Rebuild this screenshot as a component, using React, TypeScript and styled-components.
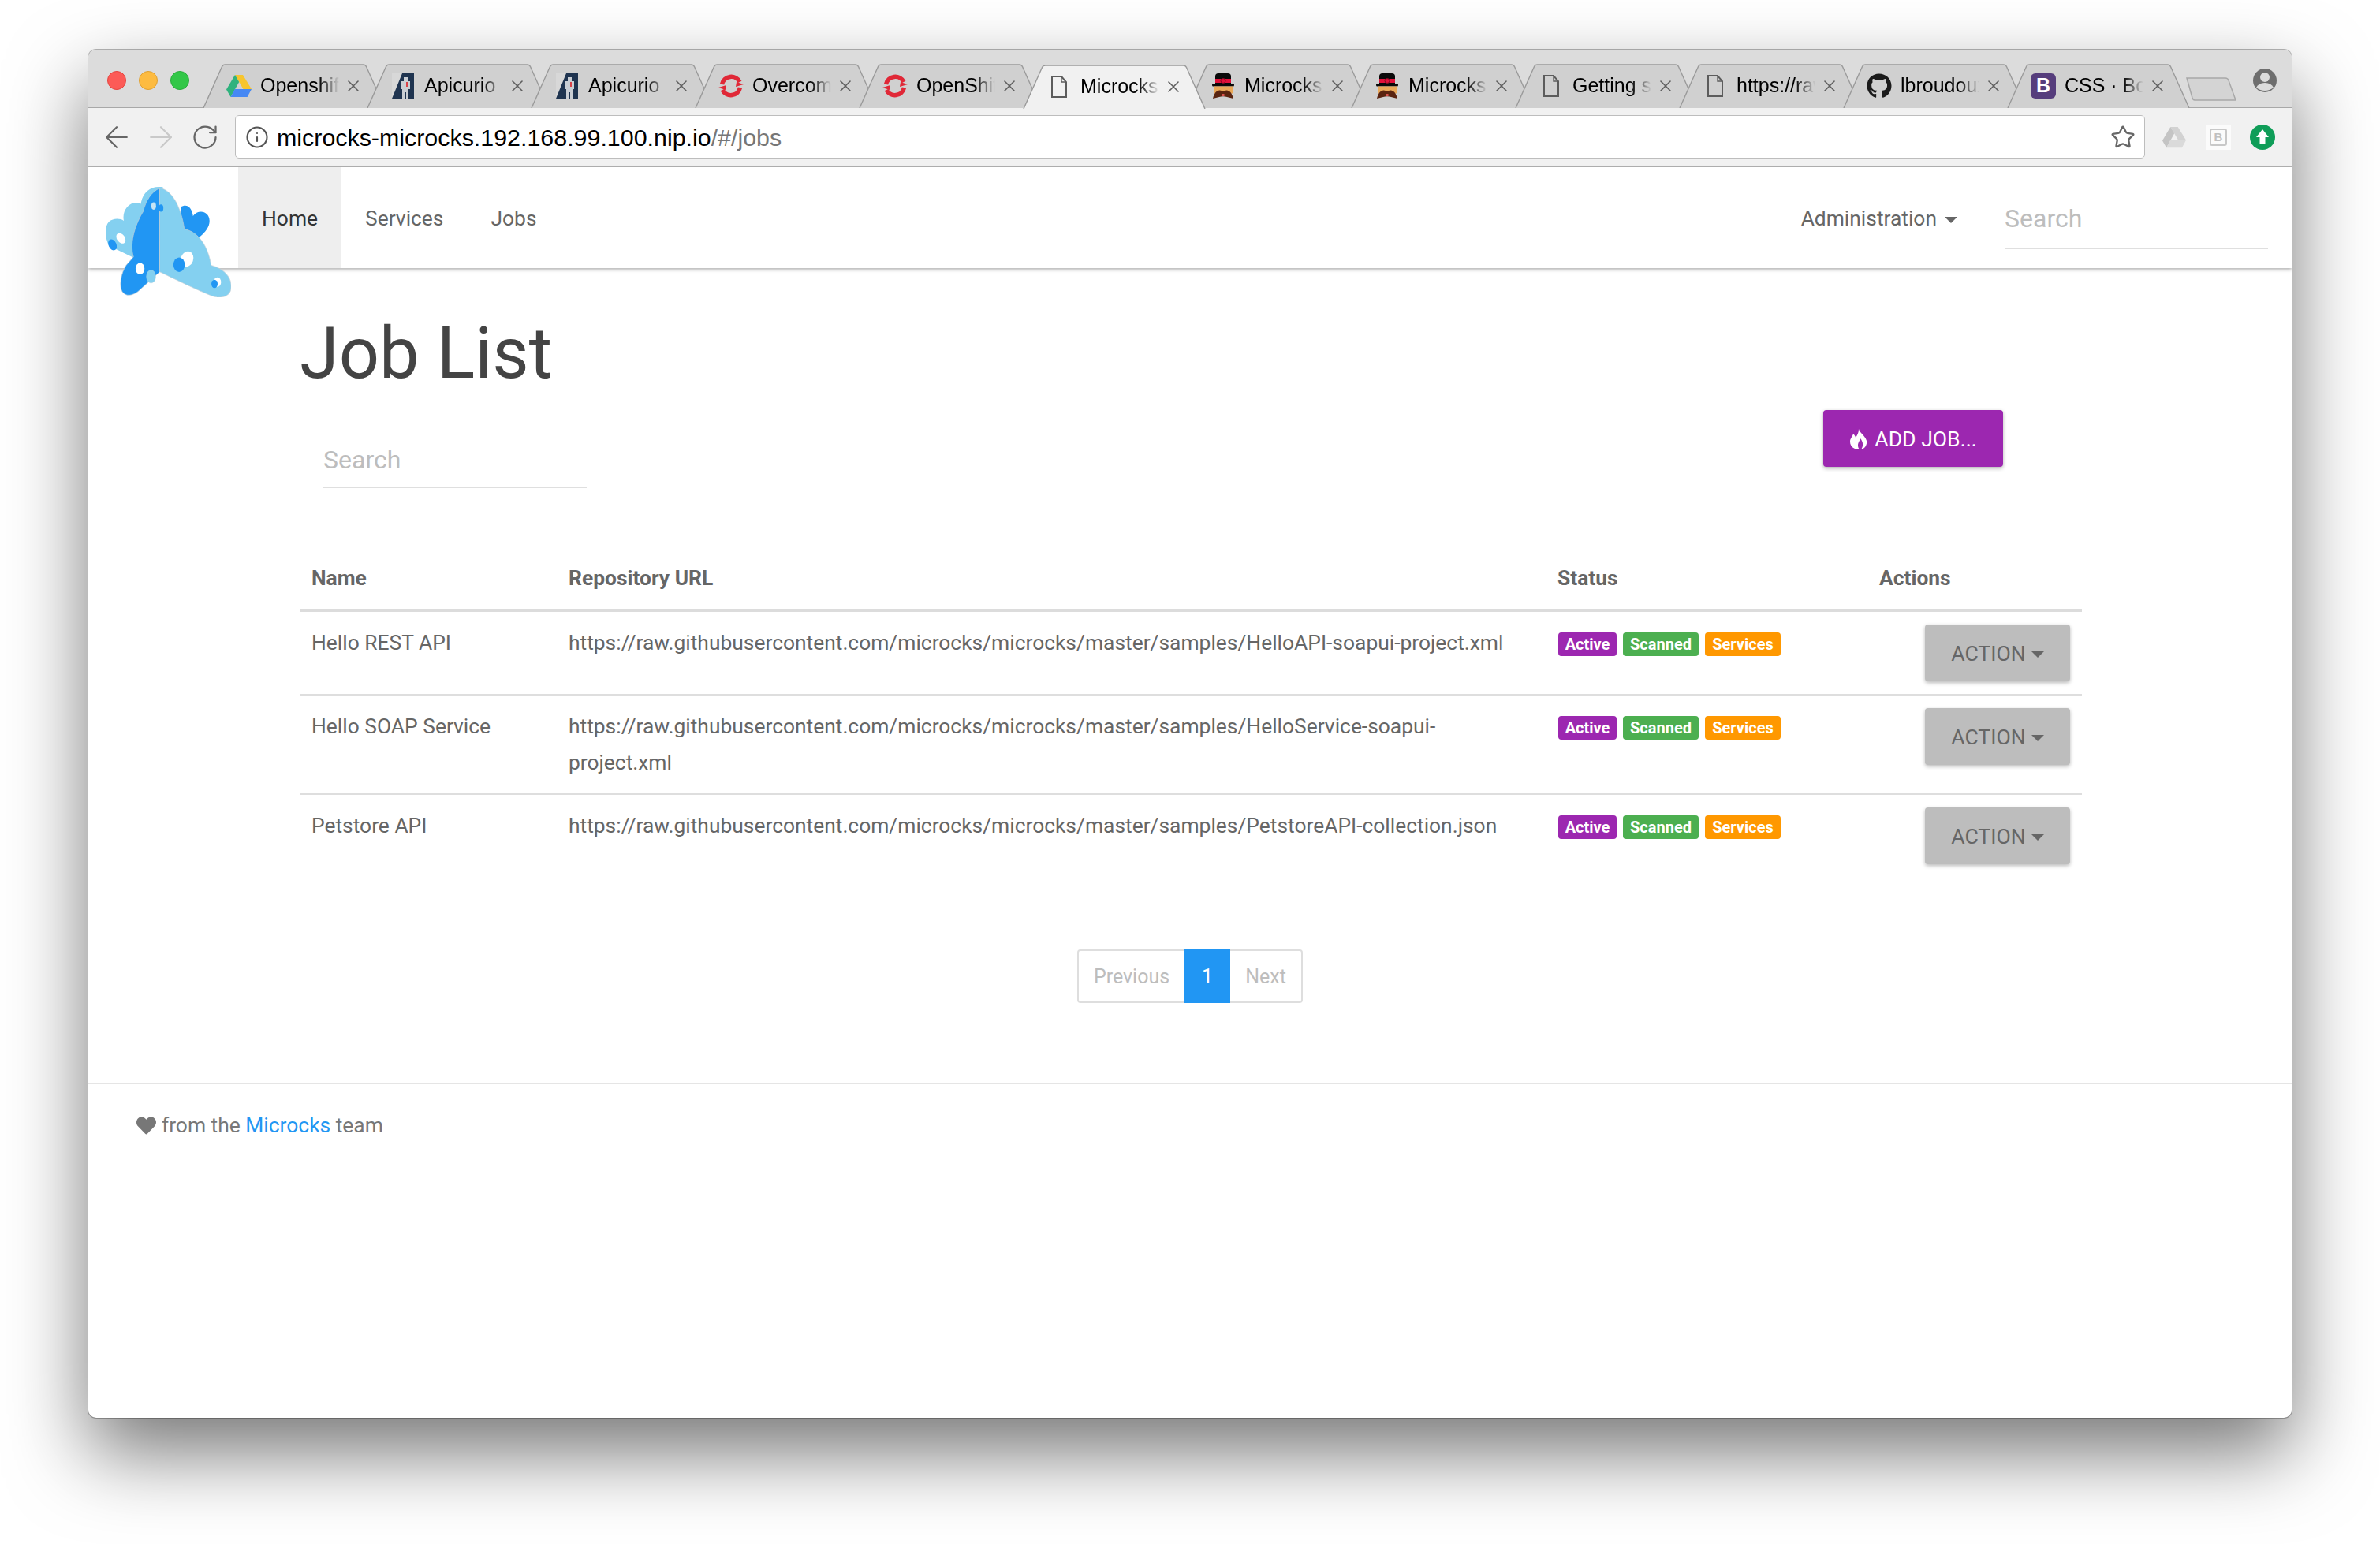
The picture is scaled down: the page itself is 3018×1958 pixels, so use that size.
import React from "react";
import styled, { createGlobalStyle } from "styled-components";
import { ArrowLeft, ArrowRight, RotateCw, Info, Star, X } from "lucide-react";
import { FaGithub, FaHeart } from "react-icons/fa";

const Global = createGlobalStyle`
  html, body { margin: 0; padding: 0; background: #fff; }
  body { font-family: Roboto, "Liberation Sans", sans-serif; }
  #root { width: 3018px; height: 1958px; overflow: hidden; }
  * { box-sizing: border-box; }
  input::placeholder { color: #bdbdbd; opacity: 1; }
`;

const Stage = styled.div`
  width: 3018px;
  height: 1958px;
  padding: 63px 112px 0;
`;
const BrowserWindow = styled.div`
  width: 2794px;
  height: 1735px;
  background: #fff;
  border-radius: 10px;
  box-shadow: 0 0 0 1px rgba(0, 0, 0, 0.28), 0 44px 100px rgba(0, 0, 0, 0.54);
  overflow: hidden;
  display: flex;
  flex-direction: column;
`;
const TabStrip = styled.div`
  height: 74px;
  flex: none;
  background: #dcdcdc;
  border-bottom: 1px solid #a8a8a8;
  display: flex;
`;
const Lights = styled.div`
  display: flex;
  gap: 16px;
  margin: 27px 17px 0 24px;
  align-self: flex-start;
`;
const Light = styled.span<{ $c: string; $b: string }>`
  width: 24px;
  height: 24px;
  border-radius: 50%;
  background: ${(p) => p.$c};
  border: 1px solid ${(p) => p.$b};
`;
const Tabs = styled.div`
  display: flex;
  align-items: flex-end;
  align-self: flex-end;
`;
const TabItem = styled.div<{ $active?: boolean }>`
  position: relative;
  width: 232px;
  height: 55px;
  margin-right: -24px;
  margin-bottom: ${(p) => (p.$active ? "-1px" : "0")};
  z-index: ${(p) => (p.$active ? 2 : 1)};
  display: flex;
  align-items: center;
  font-family: "Liberation Sans", Arial, sans-serif;
  font-size: 25px;
  color: #000;
`;
const TabShape = styled.svg`
  position: absolute;
  left: 0;
  top: 0;
  width: 232px;
  height: 56px;
`;
const Favicon = styled.span`
  position: relative;
  width: 32px;
  height: 34px;
  margin-left: 30px;
  display: flex;
  align-items: center;
  justify-content: center;
  flex: none;
`;
const TabTitle = styled.span`
  position: relative;
  width: 100px;
  margin-left: 11px;
  overflow: hidden;
  white-space: nowrap;
  flex: none;
  -webkit-mask-image: linear-gradient(to right, #000 74%, transparent 100%);
  mask-image: linear-gradient(to right, #000 74%, transparent 100%);
`;
const TabClose = styled.span`
  position: relative;
  width: 24px;
  margin-left: 6px;
  display: flex;
  justify-content: center;
  color: #5e5e5e;
  flex: none;
`;
const NewTab = styled.svg`
  width: 66px;
  height: 32px;
  margin: 34px 0 0 18px;
  flex: none;
`;
const Profile = styled.svg`
  width: 30px;
  height: 30px;
  margin: 24px 19px 0 auto;
  flex: none;
`;
const Toolbar = styled.div`
  height: 75px;
  flex: none;
  background: #f1f1f1;
  border-bottom: 1px solid #b4b4b4;
  padding: 9px 9px 10px 8px;
  display: flex;
  align-items: center;
`;
const ToolSlot = styled.span<{ $c?: string }>`
  width: 56px;
  height: 54px;
  display: flex;
  align-items: center;
  justify-content: center;
  color: ${(p) => p.$c || "#666"};
  flex: none;
`;
const Omnibox = styled.div`
  flex: 1;
  height: 55px;
  margin: 0 9px 0 10px;
  background: #fff;
  border: 1.5px solid #bdbdbd;
  border-radius: 5px;
  display: flex;
  align-items: center;
  padding: 0 11px 0 12px;
  font-family: "Liberation Sans", Arial, sans-serif;
  font-size: 30.4px;
  color: #000;
`;
const UrlText = styled.span`
  margin-left: 10px;
  padding-top: 1px;
  flex: 1;
`;
const UrlDim = styled.span`
  color: #777;
`;
const NavBar = styled.div`
  position: relative;
  height: 128px;
  flex: none;
  background: #fff;
  box-shadow: 0 2px 4px rgba(0, 0, 0, 0.3);
  display: flex;
  padding: 0 30px 0 190px;
  font-size: 26.4px;
  color: #666;
  z-index: 1;
`;
const Logo = styled.svg`
  position: absolute;
  left: 22px;
  top: 24px;
  width: 159px;
  height: 141px;
  z-index: 3;
`;
const NavLink = styled.a<{ $active?: boolean }>`
  display: flex;
  align-items: center;
  padding: 2px 30px 0;
  background: ${(p) => (p.$active ? "#eeeeee" : "transparent")};
  color: ${(p) => (p.$active ? "#333" : "#666")};
`;
const NavRight = styled.div`
  margin-left: auto;
  display: flex;
  align-items: center;
`;
const Admin = styled.span`
  display: flex;
  align-items: center;
  padding-top: 2px;
`;
const Caret = styled.i<{ $m?: number }>`
  display: inline-block;
  width: 0;
  height: 0;
  margin-left: ${(p) => p.$m ?? 10}px;
  margin-top: 4px;
  border-left: 8px solid transparent;
  border-right: 8px solid transparent;
  border-top: 8px solid currentColor;
`;
const SearchInput = styled.input<{ $w: number }>`
  width: ${(p) => p.$w}px;
  border: 0;
  border-bottom: 2px solid #dfdfdf;
  outline: none;
  background: transparent;
  padding: 0;
  font-family: Roboto, sans-serif;
  font-size: 32px;
  color: #555;
`;
const NavSearch = styled(SearchInput)`
  height: 74px;
  margin: 6px 0 0 60px;
  padding-bottom: 2px;
`;
const Main = styled.main`
  width: 2260px;
  margin-left: 268px;
  flex: none;
`;
const Title = styled.h1`
  margin: 59px 0 0;
  height: 98px;
  line-height: 100px;
  font-weight: 400;
  font-size: 90px;
  color: #444;
`;
const ToolRow = styled.div`
  height: 123px;
  display: flex;
  justify-content: space-between;
  align-items: flex-start;
`;
const PageSearch = styled(SearchInput)`
  margin: 56px 0 0 30px;
  height: 66px;
  padding-bottom: 4px;
`;
const PrimaryButton = styled.button`
  width: 228px;
  height: 72px;
  margin: 23px 100px 0 0;
  padding-top: 2px;
  border: 0;
  border-radius: 4px;
  background: #9c27b0;
  color: #fff;
  font-family: Roboto, sans-serif;
  font-size: 26.6px;
  box-shadow: 0 2px 5px rgba(0, 0, 0, 0.3);
  display: flex;
  align-items: center;
  justify-content: center;
  gap: 9px;
`;
const Table = styled.table`
  width: 2260px;
  table-layout: fixed;
  border-collapse: collapse;
  font-size: 26.4px;
  line-height: 46px;
  color: #666;
`;
const HeadCell = styled.th<{ $w: number }>`
  width: ${(p) => p.$w}px;
  height: 154px;
  padding: 0 15px 16px;
  vertical-align: bottom;
  text-align: left;
  font-weight: 700;
  border-bottom: 4px solid #dcdcdc;
`;
const Row = styled.tr`
  & + & td {
    border-top: 2px solid #dedede;
  }
`;
const Cell = styled.td`
  padding: 16px 15px;
  vertical-align: top;
`;
const Badges = styled.div`
  display: flex;
  gap: 8px;
  margin-top: 10px;
  margin-left: 1px;
`;
const Badge = styled.span<{ $c: string; $w: number }>`
  width: ${(p) => p.$w}px;
  height: 30px;
  border-radius: 4px;
  background: ${(p) => p.$c};
  color: #fff;
  font-size: 20px;
  font-weight: 700;
  line-height: 30px;
  text-align: center;
`;
const ActionWrap = styled.div`
  display: flex;
  justify-content: flex-end;
`;
const ActionButton = styled.button`
  width: 184px;
  height: 72px;
  border: 0;
  border-radius: 4px;
  background: #bdbdbd;
  color: #666;
  font-family: Roboto, sans-serif;
  font-size: 26.6px;
  box-shadow: 0 2px 5px rgba(0, 0, 0, 0.28);
  display: flex;
  align-items: center;
  justify-content: center;
`;
const Pager = styled.nav`
  width: 286px;
  height: 68px;
  margin: 92px auto 0;
  display: flex;
  border: 2px solid #dedede;
  border-radius: 4px;
  font-size: 25px;
  color: #bdbdbd;
`;
const PageCell = styled.span<{ $w: number; $active?: boolean }>`
  width: ${(p) => p.$w}px;
  margin: ${(p) => (p.$active ? "-2px 0" : "0")};
  display: flex;
  align-items: center;
  justify-content: center;
  background: ${(p) => (p.$active ? "#2196f3" : "transparent")};
  color: ${(p) => (p.$active ? "#fff" : "#bdbdbd")};
`;
const Footer = styled.footer`
  margin-top: 101px;
  border-top: 2px solid #e5e5e5;
  padding: 29px 0 0 61px;
  font-size: 26.4px;
  line-height: 46px;
  color: #777;
  display: flex;
  align-items: center;
  gap: 7px;
`;
const FooterLink = styled.a`
  color: #2196f3;
`;

const shape = "M1 56 L24.5 3.5 Q25.7 1 28.5 1 L203.5 1 Q206.3 1 207.5 3.5 L231 56";

const Flame = () => (
  <svg width="23" height="26" viewBox="0 0 23 26" fill="#fff">
    <path d="M12 0 C13 5 20 8 22 15 C23 21 19 25 15 26 C18 22 18 17 14 12 C13 16 11 17 11 21 C11 23 12 25 13 26 C7 26 1 23 1 16 C1 12 4 10 5 6 C7 8 8 10 8 11 C10 8 12 5 12 0 Z" />
  </svg>
);
const Drive = () => (
  <svg width="32" height="28" viewBox="0 0 32 28">
    <path d="M11 0 L21 0 L32 18 L21.5 18 Z" fill="#f7c52e" />
    <path d="M11 0 L16.2 9 L5.5 28 L0 18.5 Z" fill="#2fb27d" />
    <path d="M10.8 18 L32 18 L26.6 28 L5.5 28 Z" fill="#4688f4" />
  </svg>
);
const Apicurio = () => (
  <svg width="28" height="32" viewBox="0 0 28 32">
    <rect width="28" height="32" fill="#d8d8d8" />
    <path d="M13 0 L28 0 L28 32 L0 32 Z" fill="#1f3450" />
    <path d="M15 5 h5 v5 h3 v10 h-2 v12 h-3 v-8 h-2 v8 h-3 v-12 h-1 v-10 h3 Z" fill="#c9ced4" />
    <rect x="18" y="11" width="2" height="6" fill="#d8434a" />
  </svg>
);
const RedHat = () => (
  <svg width="32" height="32" viewBox="0 0 32 32" fill="none">
    <path d="M4.5 14 A12 12 0 0 1 27 11" stroke="#e02837" strokeWidth="5.5" />
    <path d="M27.5 18 A12 12 0 0 1 5 21" stroke="#e02837" strokeWidth="5.5" />
    <path d="M0 18 L10 15 L9 21 Z M32 14 L22 17 L23 11 Z" fill="#e02837" />
  </svg>
);
const Doc = () => (
  <svg width="20" height="28" viewBox="0 0 20 28" fill="none" stroke="#5c5c5c" strokeWidth="2">
    <path d="M1 1 H13 L19 8 V27 H1 Z" />
    <path d="M13 1 V8 H19" strokeWidth="1.4" />
  </svg>
);
const Mascot = () => (
  <svg width="28" height="32" viewBox="0 0 28 32">
    <path d="M4 13 L4 4 Q4 0 8 0 L20 0 Q24 0 24 4 L24 13 Z" fill="#0a0a0a" />
    <rect x="4" y="7" width="20" height="5" fill="#e2103a" />
    <circle cx="14" cy="9.5" r="3" fill="#e2103a" stroke="#7a0a20" />
    <rect x="0" y="13" width="28" height="3.5" rx="1.5" fill="#0a0a0a" />
    <rect x="2" y="16.5" width="24" height="9" fill="#eaa858" />
    <path d="M12 22 C8 20 3 23 1 32 L9 30 C12 29 16 29 19 30 L27 32 C25 23 20 20 16 22 Z" fill="#5a2410" />
    <rect x="12.5" y="26" width="3" height="3" fill="#d9534f" />
  </svg>
);
const Bootstrap = styled.span`
  width: 32px;
  height: 32px;
  border-radius: 6px;
  background: #563d7c;
  color: #fff;
  font-family: "Liberation Sans", Arial, sans-serif;
  font-weight: 700;
  font-size: 25px;
  display: flex;
  align-items: center;
  justify-content: center;
`;
const GreyB = styled.span`
  width: 32px;
  height: 32px;
  background: #fbfbfb;
  display: flex;
  align-items: center;
  justify-content: center;
`;
const GreyBInner = styled.span`
  width: 22px;
  height: 22px;
  border: 2px solid #c8c8c8;
  border-radius: 3px;
  color: #c0c0c0;
  font-family: "Liberation Sans", Arial, sans-serif;
  font-size: 15px;
  font-weight: 700;
  line-height: 18px;
  text-align: center;
`;

const tabs: { title: string; icon: React.ReactNode; active?: boolean }[] = [
  { title: "Openshift Console", icon: <Drive /> },
  { title: "Apicurio", icon: <Apicurio /> },
  { title: "Apicurio", icon: <Apicurio /> },
  { title: "Overcoming", icon: <RedHat /> },
  { title: "OpenShift", icon: <RedHat /> },
  { title: "Microcks", icon: <Doc />, active: true },
  { title: "Microcks", icon: <Mascot /> },
  { title: "Microcks", icon: <Mascot /> },
  { title: "Getting started", icon: <Doc /> },
  { title: "https://raw", icon: <Doc /> },
  { title: "lbroudoux", icon: <FaGithub size={32} color="#1b1b1b" /> },
  { title: "CSS · Bootstrap", icon: <Bootstrap>B</Bootstrap> },
];

const jobs = [
  {
    name: "Hello REST API",
    url: "https://raw.githubusercontent.com/microcks/microcks/master/samples/HelloAPI-soapui-project.xml",
  },
  {
    name: "Hello SOAP Service",
    url: "https://raw.githubusercontent.com/microcks/microcks/master/samples/HelloService-soapui-project.xml",
  },
  {
    name: "Petstore API",
    url: "https://raw.githubusercontent.com/microcks/microcks/master/samples/PetstoreAPI-collection.json",
  },
];

export default function App() {
  return (
    <Stage>
      <Global />
      <BrowserWindow>
        <TabStrip>
          <Lights>
            <Light $c="#fc5b57" $b="#e5453f" />
            <Light $c="#fdbb40" $b="#e0a030" />
            <Light $c="#33c748" $b="#2aac3c" />
          </Lights>
          <Tabs>
            {tabs.map((t, i) => (
              <TabItem key={i} $active={t.active}>
                <TabShape viewBox="0 0 232 56">
                  <path d={shape} fill={t.active ? "#f1f1f1" : "#d0d0d0"} stroke="#9a9a9a" strokeWidth="1.4" />
                </TabShape>
                <Favicon>{t.icon}</Favicon>
                <TabTitle>{t.title}</TabTitle>
                <TabClose>
                  <X size={30} strokeWidth={1.6} />
                </TabClose>
              </TabItem>
            ))}
          </Tabs>
          <NewTab viewBox="0 0 66 32">
            <path d="M2 2 H51 Q54 2 55 5 L64 30 H12 Q10 30 9 27 Z" fill="#d4d4d4" stroke="#a8a8a8" strokeWidth="1.5" />
          </NewTab>
          <Profile viewBox="0 0 30 30">
            <circle cx="15" cy="15" r="15" fill="#6e6e6e" />
            <circle cx="15" cy="11" r="6" fill="#dcdcdc" />
            <path d="M4 24 Q7 18 15 18 Q23 18 26 24 Q21 28 15 28 Q9 28 4 24 Z" fill="#dcdcdc" />
          </Profile>
        </TabStrip>
        <Toolbar>
          <ToolSlot>
            <ArrowLeft size={44} strokeWidth={1.2} />
          </ToolSlot>
          <ToolSlot $c="#c9c9c9">
            <ArrowRight size={44} strokeWidth={1.2} />
          </ToolSlot>
          <ToolSlot>
            <RotateCw size={36} strokeWidth={1.5} />
          </ToolSlot>
          <Omnibox>
            <Info size={30} strokeWidth={1.7} color="#555" />
            <UrlText>
              microcks-microcks.192.168.99.100.nip.io<UrlDim>/#/jobs</UrlDim>
            </UrlText>
            <Star size={32} strokeWidth={1.8} color="#666" />
          </Omnibox>
          <ToolSlot>
            <svg width="30" height="28" viewBox="0 0 32 28">
              <path d="M11 0 L21 0 L32 18 L21.5 18 Z" fill="#d2d2d2" />
              <path d="M11 0 L16.2 9 L5.5 28 L0 18.5 Z" fill="#c4c4c4" />
              <path d="M10.8 18 L32 18 L26.6 28 L5.5 28 Z" fill="#dadada" />
            </svg>
          </ToolSlot>
          <ToolSlot>
            <GreyB>
              <GreyBInner>B</GreyBInner>
            </GreyB>
          </ToolSlot>
          <ToolSlot>
            <svg width="32" height="32" viewBox="0 0 32 32">
              <circle cx="16" cy="16" r="16" fill="#0f9d58" />
              <path d="M16 6 L24 16 H19.5 V25 H12.5 V16 H8 Z" fill="#fff" />
            </svg>
          </ToolSlot>
        </Toolbar>
        <NavBar>
          <Logo viewBox="72 108 478 424">
            <path d="M180 382 L85 336 C70 310 66 262 84 244 C100 230 126 230 141 240 C132 196 170 158 206 176 C212 132 244 104 290 112 L300 300 Z" fill="#84d0f0" />
            <path d="M358 188 C385 172 402 195 405 222 C425 195 467 203 468 240 C468 265 450 285 430 302 L360 278 Z" fill="#2196f3" />
            <path d="M278 116 C245 130 225 165 215 205 C190 245 160 320 178 378 L150 410 C130 440 122 490 135 510 C150 532 175 525 195 510 L278 435 Z" fill="#2196f3" stroke="#c2ced6" strokeWidth="2" />
            <path d="M278 116 C325 120 360 190 372 272 C425 282 462 335 474 410 C515 420 552 450 550 490 C552 520 530 534 500 532 C488 532 470 528 278 435 Z" fill="#84d0f0" stroke="#c2ced6" strokeWidth="2" />
            <ellipse cx="130" cy="307" rx="15" ry="22" transform="rotate(-35 130 307)" fill="#fff" />
            <ellipse cx="98" cy="332" rx="15" ry="22" transform="rotate(-25 98 332)" fill="#2196f3" />
            <ellipse cx="255" cy="184" rx="9" ry="14" fill="#c6e4f4" />
            <ellipse cx="283" cy="192" rx="9" ry="14" fill="#2196f3" />
            <ellipse cx="203" cy="423" rx="17" ry="22" fill="#fff" />
            <ellipse cx="245" cy="453" rx="18" ry="25" fill="#84d0f0" stroke="#c2ced6" />
            <ellipse cx="382" cy="386" rx="24" ry="30" transform="rotate(20 382 386)" fill="#fff" />
            <ellipse cx="352" cy="408" rx="22" ry="28" fill="#2196f3" />
            <ellipse cx="498" cy="474" rx="14" ry="18" fill="#fff" />
            <ellipse cx="487" cy="481" rx="12" ry="16" fill="#2196f3" />
          </Logo>
          <NavLink $active>Home</NavLink>
          <NavLink>Services</NavLink>
          <NavLink>Jobs</NavLink>
          <NavRight>
            <Admin>
              Administration
              <Caret />
            </Admin>
            <NavSearch $w={334} placeholder="Search" />
          </NavRight>
        </NavBar>
        <Main>
          <Title>Job List</Title>
          <ToolRow>
            <PageSearch $w={334} placeholder="Search" />
            <PrimaryButton>
              <Flame />
              ADD JOB...
            </PrimaryButton>
          </ToolRow>
          <Table>
            <thead>
              <tr>
                <HeadCell $w={326}>Name</HeadCell>
                <HeadCell $w={1254}>Repository URL</HeadCell>
                <HeadCell $w={408}>Status</HeadCell>
                <HeadCell $w={272}>Actions</HeadCell>
              </tr>
            </thead>
            <tbody>
              {jobs.map((j) => (
                <Row key={j.name}>
                  <Cell>{j.name}</Cell>
                  <Cell>{j.url}</Cell>
                  <Cell>
                    <Badges>
                      <Badge $c="#9c27b0" $w={74}>Active</Badge>
                      <Badge $c="#4caf50" $w={96}>Scanned</Badge>
                      <Badge $c="#ff9800" $w={96}>Services</Badge>
                    </Badges>
                  </Cell>
                  <Cell>
                    <ActionWrap>
                      <ActionButton>
                        ACTION
                        <Caret $m={7} />
                      </ActionButton>
                    </ActionWrap>
                  </Cell>
                </Row>
              ))}
            </tbody>
          </Table>
        </Main>
        <Pager>
          <PageCell $w={134}>Previous</PageCell>
          <PageCell $w={58} $active>1</PageCell>
          <PageCell $w={90}>Next</PageCell>
        </Pager>
        <Footer>
          <FaHeart size={25} />
          <span>
            from the <FooterLink>Microcks</FooterLink> team
          </span>
        </Footer>
      </BrowserWindow>
    </Stage>
  );
}
